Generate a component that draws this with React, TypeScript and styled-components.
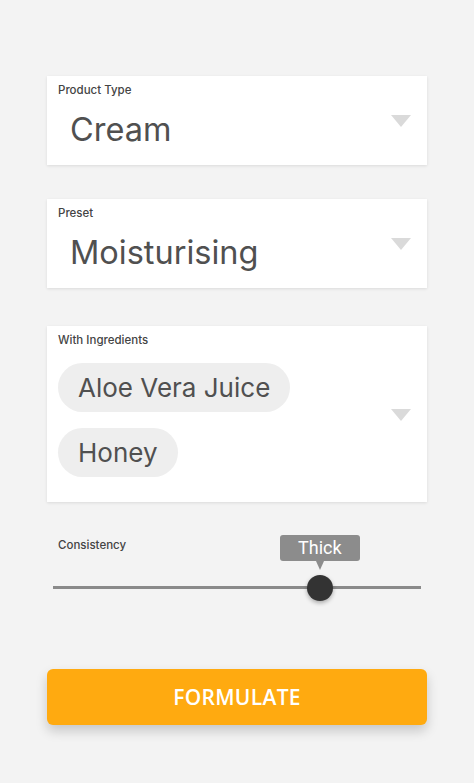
import React from 'react'
import styled, { createGlobalStyle } from 'styled-components'

const GlobalStyle = createGlobalStyle`
  html, body {
    margin: 0;
    padding: 0;
    background: #f3f3f3;
  }
  body {
    font-family: Inter, Roboto, 'Liberation Sans', sans-serif;
  }
`

const Page = styled.div`
  width: 474px;
  min-height: 783px;
  box-sizing: border-box;
  padding: 76px 47px 0;
  display: flex;
  flex-direction: column;
`

const Card = styled.div<{ $gap?: number }>`
  background: #fff;
  box-shadow: 0 1px 3px rgba(0, 0, 0, 0.1);
  margin-bottom: ${(p) => p.$gap ?? 34}px;
  padding: 7px 11px 0;
  position: relative;
  box-sizing: border-box;
`

const Label = styled.div`
  font-family: Inter, Roboto, sans-serif;
  font-size: 11.5px;
  font-weight: 500;
  color: #444;
  line-height: 14px;
`

const SelectRow = styled.div`
  display: flex;
  align-items: center;
  justify-content: space-between;
  height: 68px;
  padding-left: 12px;
  padding-right: 5px;
`

const Value = styled.div`
  font-size: 32.5px;
  color: #505050;
  margin-top: -3px;
`

const Caret = styled.div<{ $offset?: number }>`
  width: 0;
  height: 0;
  border-left: 10px solid transparent;
  border-right: 10px solid transparent;
  border-top: 12px solid #dadada;
  margin-top: ${(p) => p.$offset ?? -21}px;
`

const ChipArea = styled.div`
  display: flex;
  align-items: center;
  justify-content: space-between;
  padding: 16px 5px 25px 0;
`

const Chips = styled.div`
  display: flex;
  flex-direction: column;
  align-items: flex-start;
  gap: 16px;
`

const Chip = styled.div`
  background: #eeeeee;
  border-radius: 25px;
  height: 49px;
  padding: 0 20px;
  display: flex;
  align-items: center;
  font-size: 26px;
  color: #505050;
`

const SliderBlock = styled.div`
  padding: 0 6px 0 11px;
  margin-top: 36px;
`

const SliderLabel = styled(Label)``

const Track = styled.div`
  position: relative;
  height: 3px;
  background: #8a8a8a;
  margin: 34px 0 0 -5px;
`

const Thumb = styled.div`
  position: absolute;
  top: 50%;
  width: 26px;
  height: 26px;
  border-radius: 50%;
  background: #333;
  transform: translate(-50%, -50%);
  box-shadow: 0 2px 4px rgba(0, 0, 0, 0.3);
`

const Tip = styled.div`
  position: absolute;
  bottom: 40px;
  left: 50%;
  transform: translateX(-50%);
  width: 80px;
  height: 26px;
  border-radius: 3px;
  background: #8c8c8c;
  color: #fff;
  font-family: Roboto, sans-serif;
  font-size: 18px;
  display: flex;
  align-items: center;
  justify-content: center;
  &::after {
    content: '';
    position: absolute;
    top: 100%;
    left: 50%;
    margin-left: -4px;
    border-left: 4px solid transparent;
    border-right: 4px solid transparent;
    border-top: 9px solid #8c8c8c;
  }
`

const Button = styled.button`
  margin-top: 80px;
  height: 56px;
  border: none;
  border-radius: 6px;
  background: #ffaa10;
  color: #fff;
  font-family: 'Open Sans', sans-serif;
  font-weight: 600;
  font-size: 21px;
  letter-spacing: 0.3px;
  box-shadow: 0 6px 12px rgba(0, 0, 0, 0.18);
`

function Select({ label, value, gap }: { label: string; value: string; gap?: number }) {
  return (
    <Card $gap={gap}>
      <Label>{label}</Label>
      <SelectRow>
        <Value>{value}</Value>
        <Caret />
      </SelectRow>
    </Card>
  )
}

export default function App() {
  const position = 72.5
  return (
    <>
      <GlobalStyle />
      <Page>
        <Select label="Product Type" value="Cream" />
        <Select label="Preset" value="Moisturising" gap={38} />
        <Card $gap={0}>
          <Label>With Ingredients</Label>
          <ChipArea>
            <Chips>
              <Chip>Aloe Vera Juice</Chip>
              <Chip>Honey</Chip>
            </Chips>
            <Caret $offset={-10} />
          </ChipArea>
        </Card>
        <SliderBlock>
          <SliderLabel>Consistency</SliderLabel>
          <Track>
            <Thumb style={{ left: `${position}%` }}>
              <Tip>Thick</Tip>
            </Thumb>
          </Track>
        </SliderBlock>
        <Button>FORMULATE</Button>
      </Page>
    </>
  )
}
